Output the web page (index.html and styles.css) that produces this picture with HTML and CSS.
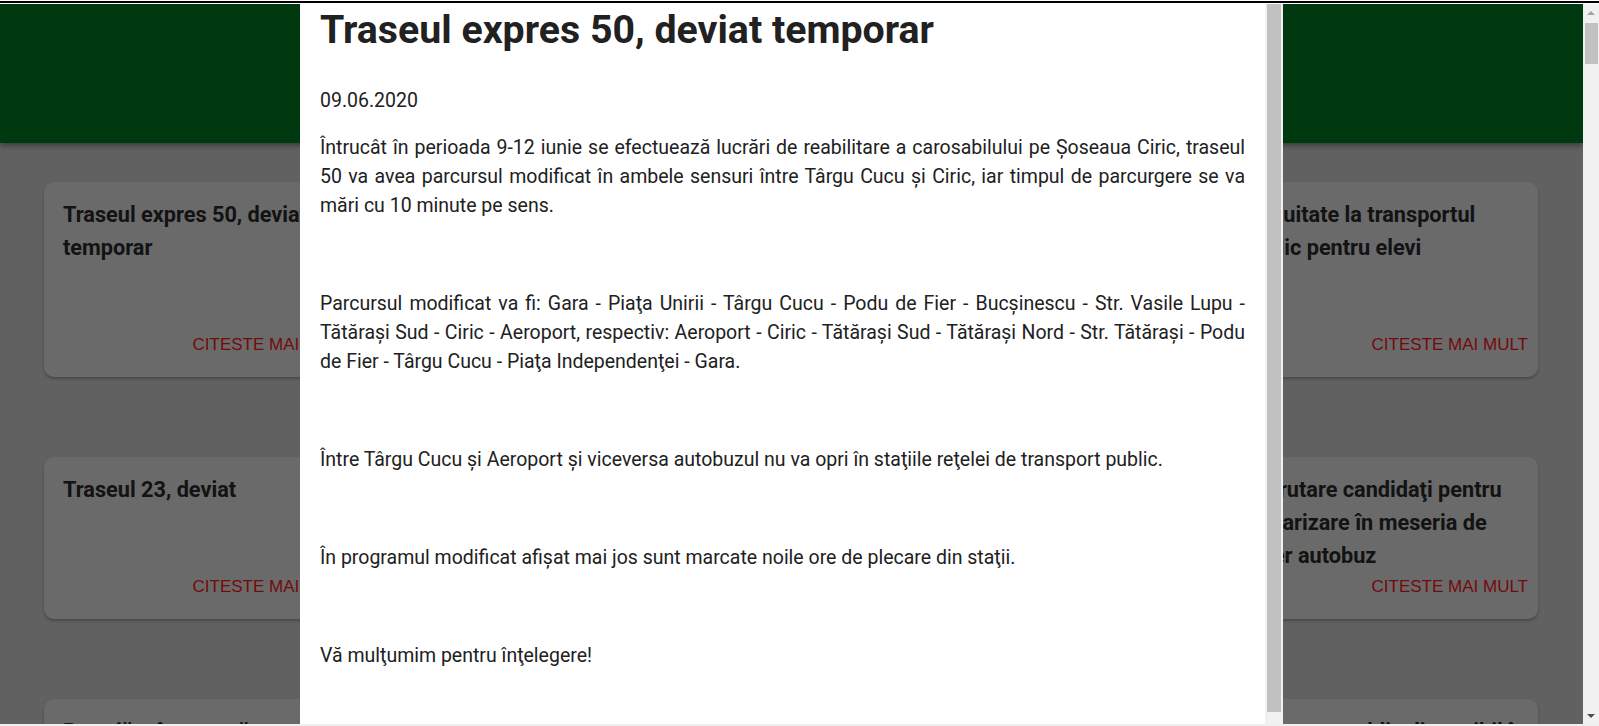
FILE: index.html
```html
<!DOCTYPE html>
<html lang="ro">
<head>
<meta charset="utf-8">
<title>Traseul expres 50, deviat temporar</title>
<link rel="stylesheet" href="styles.css">
</head>
<body>
<div class="frame-top"></div>
<div class="viewport">
  <div class="page">
    <header class="site-header"></header>
    <main class="news-grid">
      <article class="card">
        <h3 class="card-title">Traseul expres 50, deviat temporar</h3>
        <a class="card-link" href="#">Citeste mai mult</a>
      </article>
      <article class="card">
        <h3 class="card-title">Program special de circulaţie pe durata sărbătorilor de Rusalii în municipiul Iași și în împrejurimi</h3>
        <a class="card-link" href="#">Citeste mai mult</a>
      </article>
      <article class="card">
        <h3 class="card-title">Gratuitate la transportul public pentru elevi</h3>
        <a class="card-link" href="#">Citeste mai mult</a>
      </article>
      <article class="card">
        <h3 class="card-title">Traseul 23, deviat</h3>
        <a class="card-link" href="#">Citeste mai mult</a>
      </article>
      <article class="card">
        <h3 class="card-title">Modificări temporare ale traseelor de tramvai</h3>
        <a class="card-link" href="#">Citeste mai mult</a>
      </article>
      <article class="card">
        <h3 class="card-title">Recrutare candidaţi pentru școlarizare în meseria de șofer autobuz</h3>
        <a class="card-link" href="#">Citeste mai mult</a>
      </article>
      <article class="card">
        <h3 class="card-title">Protejăm împreună sănătatea călătorilor</h3>
        <a class="card-link" href="#">Citeste mai mult</a>
      </article>
      <article class="card">
        <h3 class="card-title">Program de vară pentru liniile de autobuz</h3>
        <a class="card-link" href="#">Citeste mai mult</a>
      </article>
      <article class="card">
        <h3 class="card-title">Transport public disponibil în zilele libere</h3>
        <a class="card-link" href="#">Citeste mai mult</a>
      </article>
    </main>
    <div class="backdrop">
      <div class="modal">
        <div class="modal-body">
          <h1 class="modal-title">Traseul expres 50, deviat temporar</h1>
          <p class="modal-date">09.06.2020</p>
          <p>Întrucât în perioada 9-12 iunie se efectuează lucrări de reabilitare a carosabilului pe Șoseaua Ciric, traseul 50 va avea parcursul modificat în ambele sensuri între Târgu Cucu și Ciric, iar timpul de parcurgere se va mări cu 10 minute pe sens.</p>
          <p>&nbsp;</p>
          <p>Parcursul modificat va fi: Gara - Piaţa Unirii - Târgu Cucu - Podu de Fier - Bucșinescu - Str. Vasile Lupu - Tătărași Sud - Ciric - Aeroport, respectiv: Aeroport - Ciric - Tătărași Sud - Tătărași Nord - Str. Tătărași - Podu de Fier - Târgu Cucu - Piaţa Independenţei - Gara.</p>
          <p>&nbsp;</p>
          <p>Între Târgu Cucu și Aeroport și viceversa autobuzul nu va opri în staţiile reţelei de transport public.</p>
          <p>&nbsp;</p>
          <p>În programul modificat afișat mai jos sunt marcate noile ore de plecare din staţii.</p>
          <p>&nbsp;</p>
          <p>Vă mulţumim pentru înţelegere!</p>
        </div>
        <div class="modal-scroll"><div class="modal-thumb"></div></div>
      </div>
    </div>
  </div>
  <div class="page-scroll">
    <div class="sb-btn"><span class="arrow-up"></span></div>
    <div class="sb-thumb"></div>
    <div class="sb-space"></div>
    <div class="sb-btn"><span class="arrow-down"></span></div>
  </div>
</div>
<div class="frame-bottom"></div>
</body>
</html>
```
FILE: styles.css
```css
* { box-sizing: border-box; }
html, body { margin: 0; padding: 0; }
body {
  width: 1599px;
  height: 726px;
  overflow: hidden;
  font-family: Roboto, "Noto Sans", sans-serif;
  background: #fff;
}
.frame-top {
  height: 4px;
  background: linear-gradient(#fff 0 1px, #000 1px 3px, #fff 3px 4px);
}
.frame-bottom {
  height: 2px;
  background: #efefef;
}
.viewport {
  display: flex;
  height: 720px;
}
.page {
  position: relative;
  flex: 1;
  overflow: hidden;
  background: #c2c2c2;
}
.site-header {
  height: 139px;
  background: #00701e;
  box-shadow: 0 2px 6px rgba(0,0,0,0.45);
  position: relative;
  z-index: 1;
}
.news-grid {
  display: grid;
  grid-template-columns: repeat(3, 315px);
  justify-content: space-between;
  row-gap: 80px;
  padding: 39px 45px 0 44px;
}
.card {
  display: flex;
  flex-direction: column;
  background: #d4d4d4;
  border-radius: 10px;
  box-shadow: 0 2px 3px rgba(0,0,0,0.25);
  padding: 16px 10px 22px 19px;
}
.card-title {
  margin: 0;
  font-size: 21.7px;
  line-height: 33px;
  font-weight: 700;
  color: #262626;
}
.card-link {
  margin-top: auto;
  padding-top: 5px;
  align-self: flex-end;
  font-family: "Liberation Sans", Arial, sans-serif;
  font-size: 17px;
  line-height: 20px;
  text-transform: uppercase;
  text-decoration: none;
  color: #e81616;
}
.backdrop {
  position: absolute;
  inset: 0;
  z-index: 5;
  background: rgba(0,0,0,0.5);
}
.modal {
  position: absolute;
  left: 300px;
  top: 0;
  width: 983px;
  height: 720px;
  display: flex;
  background: #fff;
}
.modal-body {
  flex: 1;
  overflow: hidden;
  padding: 2px 20px 0 20px;
  color: #212121;
  font-size: 19.5px;
  line-height: 29px;
}
.modal-title {
  margin: 0 0 32px;
  font-size: 39.3px;
  line-height: 48px;
  font-weight: 700;
  color: #212121;
}
.modal-body p {
  margin: 0 0 20px;
  text-align: justify;
}
.modal-body .modal-date {
  margin-bottom: 18px;
}
.modal-scroll {
  width: 18px;
  background: #f1f1f1;
  padding: 0 2px;
}
.modal-thumb {
  height: 708px;
  background: #c1c1c1;
}
.page-scroll {
  width: 16px;
  display: flex;
  flex-direction: column;
  background: #f1f1f1;
}
.sb-btn {
  height: 17px;
  display: flex;
  align-items: center;
  justify-content: center;
}
.sb-thumb {
  height: 41px;
  margin: 2px 1px 0 2px;
  background: #c1c1c1;
}
.sb-space { flex: 1; }
.arrow-up {
  width: 0; height: 0;
  border-left: 4px solid transparent;
  border-right: 4px solid transparent;
  border-bottom: 4px solid #a3a3a3;
}
.arrow-down {
  width: 0; height: 0;
  border-left: 4px solid transparent;
  border-right: 4px solid transparent;
  border-top: 4px solid #505050;
}
```
